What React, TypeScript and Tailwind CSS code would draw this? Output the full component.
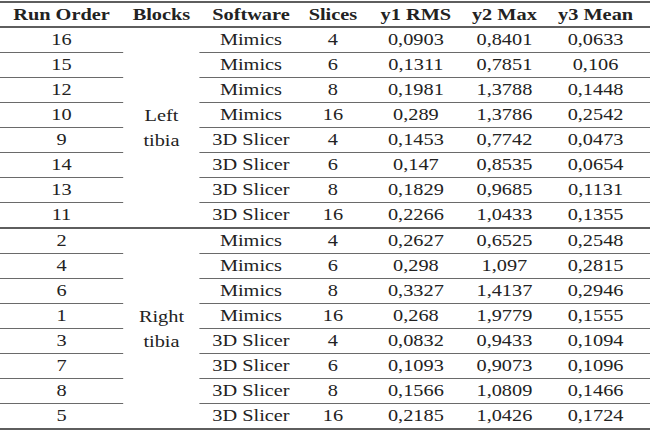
import React from "react";

type Row = { run: string; sw: string; sl: string; a: string; b: string; c: string };

const left: Row[] = [
  { run: "16", sw: "Mimics", sl: "4", a: "0,0903", b: "0,8401", c: "0,0633" },
  { run: "15", sw: "Mimics", sl: "6", a: "0,1311", b: "0,7851", c: "0,106" },
  { run: "12", sw: "Mimics", sl: "8", a: "0,1981", b: "1,3788", c: "0,1448" },
  { run: "10", sw: "Mimics", sl: "16", a: "0,289", b: "1,3786", c: "0,2542" },
  { run: "9", sw: "3D Slicer", sl: "4", a: "0,1453", b: "0,7742", c: "0,0473" },
  { run: "14", sw: "3D Slicer", sl: "6", a: "0,147", b: "0,8535", c: "0,0654" },
  { run: "13", sw: "3D Slicer", sl: "8", a: "0,1829", b: "0,9685", c: "0,1131" },
  { run: "11", sw: "3D Slicer", sl: "16", a: "0,2266", b: "1,0433", c: "0,1355" },
];

const right: Row[] = [
  { run: "2", sw: "Mimics", sl: "4", a: "0,2627", b: "0,6525", c: "0,2548" },
  { run: "4", sw: "Mimics", sl: "6", a: "0,298", b: "1,097", c: "0,2815" },
  { run: "6", sw: "Mimics", sl: "8", a: "0,3327", b: "1,4137", c: "0,2946" },
  { run: "1", sw: "Mimics", sl: "16", a: "0,268", b: "1,9779", c: "0,1555" },
  { run: "3", sw: "3D Slicer", sl: "4", a: "0,0832", b: "0,9433", c: "0,1094" },
  { run: "7", sw: "3D Slicer", sl: "6", a: "0,1093", b: "0,9073", c: "0,1096" },
  { run: "8", sw: "3D Slicer", sl: "8", a: "0,1566", b: "1,0809", c: "0,1466" },
  { run: "5", sw: "3D Slicer", sl: "16", a: "0,2185", b: "1,0426", c: "0,1724" },
];

function Group({ rows, l1, l2 }: { rows: Row[]; l1: string; l2: string }) {
  return (
    <div className="flex">
      <div className="w-[96.85px] flex flex-col">
        {rows.map((r, i) => (
          <div
            key={i}
            className={
              i < rows.length - 1
                ? "h-[25px] border-b border-[#6a6a6a] flex items-center justify-center"
                : "h-[24px] flex items-center justify-center"
            }
          >
            {r.run}
          </div>
        ))}
      </div>
      <div className="w-[60.6px] flex flex-col items-center justify-center leading-[25px]">
        <span>{l1}</span>
        <span>{l2}</span>
      </div>
      <div className="flex-1 flex flex-col">
        {rows.map((r, i) => (
          <div
            key={i}
            className={
              i < rows.length - 1
                ? "h-[25px] border-b border-[#6a6a6a] flex items-center"
                : "h-[24px] flex items-center"
            }
          >
            <div className="w-[80.3px] text-center">{r.sw}</div>
            <div className="w-[48.8px] text-center">{r.sl}</div>
            <div className="w-[81.9px] text-center">{r.a}</div>
            <div className="w-[57.5px] text-center">{r.b}</div>
            <div className="flex-1 text-center">{r.c}</div>
          </div>
        ))}
      </div>
    </div>
  );
}

export default function App() {
  return (
    <div className="w-[650px] h-[437px] bg-white overflow-hidden">
      <div className="w-[512px] origin-top-left scale-x-[1.27] font-['Liberation_Serif',serif] text-[16px] text-[#222222] pt-[1px]">
        <div className="h-[2px] bg-[#5e5e5e]" />
        <div className="h-[23px] flex items-center font-bold">
          <div className="w-[96.85px] text-center">Run Order</div>
          <div className="w-[60.6px] text-center">Blocks</div>
          <div className="w-[80.3px] text-center">Software</div>
          <div className="w-[48.8px] text-center">Slices</div>
          <div className="w-[81.9px] text-center">y1 RMS</div>
          <div className="w-[57.5px] text-center">y2 Max</div>
          <div className="flex-1 text-center">y3 Mean</div>
        </div>
        <div className="h-[2px] bg-[#5e5e5e]" />
        <Group rows={left} l1="Left" l2="tibia" />
        <div className="h-[2px] bg-[#5e5e5e]" />
        <Group rows={right} l1="Right" l2="tibia" />
        <div className="h-[2px] bg-[#5e5e5e]" />
      </div>
    </div>
  );
}
